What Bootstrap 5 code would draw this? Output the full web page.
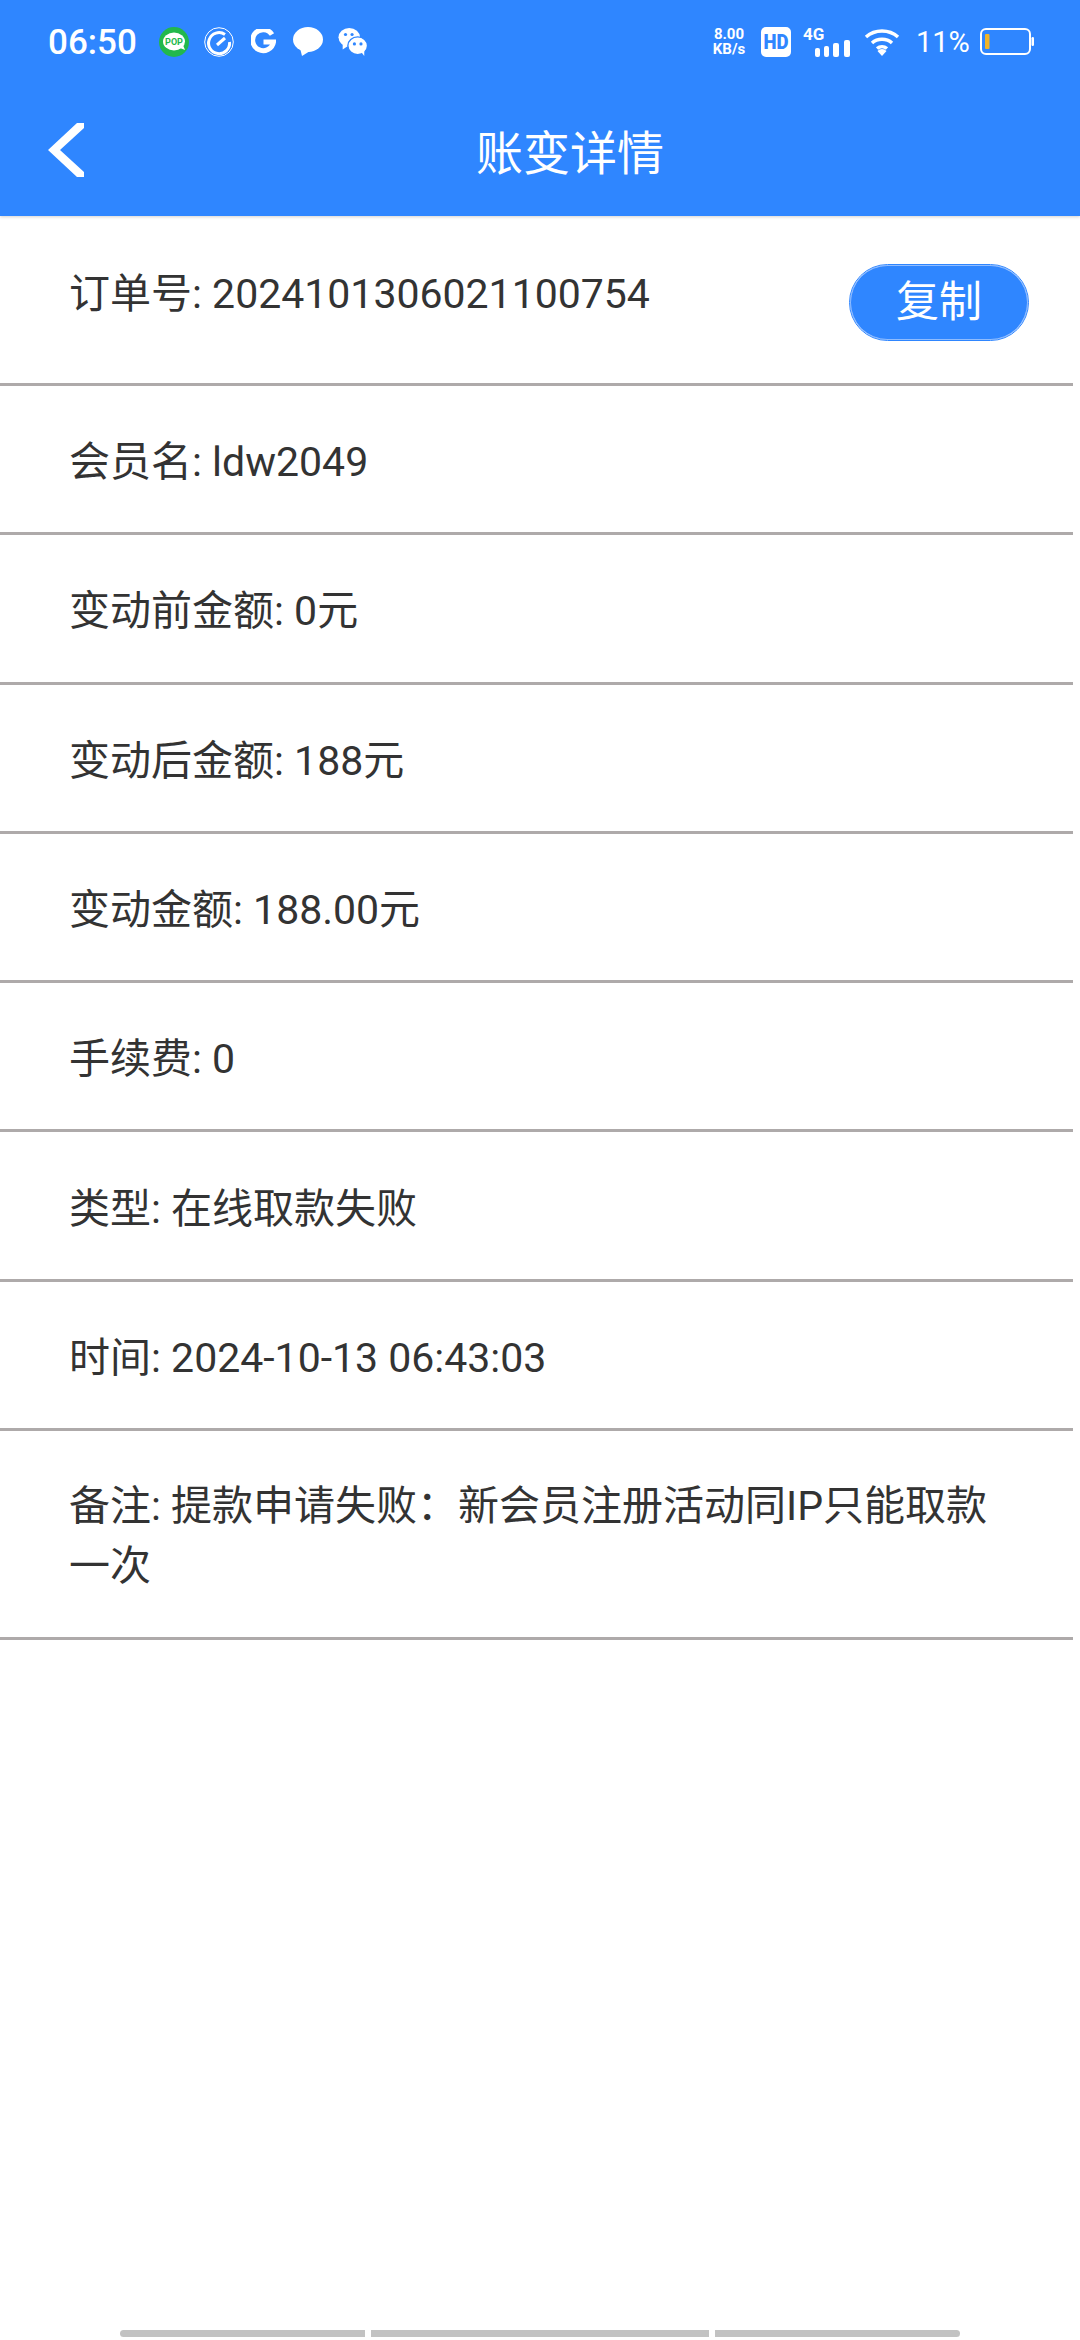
<!DOCTYPE html>
<html lang="zh-CN">
<head>
    <meta charset="UTF-8">
    <meta name="viewport" content="width=device-width, initial-scale=1.0">
    <title>账变详情</title>
    <link href="https://cdn.jsdelivr.net/npm/bootstrap@5.3.0/dist/css/bootstrap.min.css" rel="stylesheet">
    <style>
        body {
            background-color: #fff;
            font-family: Roboto, "Noto Sans CJK SC", sans-serif;
            color: #333;
        }
        .page-wrap {
            width: 1080px;
            height: 2340px;
        }
        .app-header {
            height: 216px;
            background-color: #2f86ff;
            color: #fff;
            box-shadow: 0 1px 3px rgba(0,0,0,.18);
        }
        .status-row {
            height: 84px;
            padding: 0 46px 0 48px;
        }
        .status-time {
            font-size: 35px;
            font-weight: 500;
            line-height: 1;
            width: 111px;
        }
        .app-gap { margin-left: 15px; }
        .app-gap-wide { margin-left: 17px; }
        .net-speed {
            width: 36px;
            font-size: 15px;
            font-weight: 700;
            line-height: 15px;
            text-align: center;
            white-space: nowrap;
        }
        .hd-icon { margin-left: 14px; }
        .signal-icon { margin-left: 12px; }
        .wifi-icon { margin-left: 13px; }
        .battery-text {
            margin-left: 16px;
            width: 54px;
            font-size: 29px;
            line-height: 1;
        }
        .battery-icon { margin-left: 10px; }
        .title-row {
            height: 132px;
        }
        .back-btn {
            left: 48px;
            top: 39px;
        }
        .page-title {
            font-size: 47px;
            line-height: 1;
            margin-top: 6px;
            margin-left: 60px;
        }
        .detail-row {
            width: 1073px;
            padding: 6px 46px 0 69px;
            font-size: 41px;
            line-height: 60px;
            border-bottom: 3px solid #aeaaaa;
            height: 149.3px;
        }
        .detail-order {
            height: 170px;
            padding-top: 48px;
            padding-right: 45px;
            align-items: flex-start !important;
        }
        .detail-note {
            height: 209px;
            padding-top: 45px;
            padding-right: 70px;
            align-items: flex-start !important;
        }
        .copy-btn {
            width: 178px;
            height: 75px;
            margin-top: 1px;
            padding: 0;
            border-radius: 38px;
            background-color: #2f86ff;
            border: 1px solid #8fbcff;
            outline: 1px solid #2f86ff;
            color: #fff;
            font-size: 43px;
            line-height: 1;
        }
        .scroll-wrap {
            gap: 6px;
            margin-bottom: 3px;
        }
        .scroll-bar {
            height: 7px;
            background-color: #c2c2c2;
        }
        .bar-left { width: 245px; border-radius: 4px 0 0 4px; }
        .bar-mid { width: 338px; }
        .bar-right { width: 245px; border-radius: 0 4px 4px 0; }
    </style>
</head>
<body class="m-0">
<div class="page-wrap d-flex flex-column">
    <header class="app-header flex-shrink-0">
        <div class="status-row d-flex align-items-center">
            <span class="status-time">06:50</span>
            <div class="d-flex align-items-center">
                <svg width="30" height="30" viewBox="0 0 30 30"><circle cx="15" cy="15" r="15" fill="#22b84c"/><ellipse cx="15" cy="14.500" rx="11" ry="9" fill="#fff"/><path d="M21 21l5 2-2-5z" fill="#fff"/><text x="15" y="18" font-size="9" font-weight="700" text-anchor="middle" fill="#22b84c" font-family="Roboto">POP</text></svg>
                <svg class="app-gap" width="30" height="30" viewBox="0 0 30 30" fill="none" stroke="#fff"><circle cx="15" cy="15" r="14.300" stroke-width="1"/><path d="M21 7.500A10.500 10.500 0 1 0 25.500 15" stroke-width="3"/><path d="M13 18l8-7" stroke-width="3"/></svg>
                <svg class="app-gap-wide" width="25" height="26" viewBox="0 0 25 26" fill="none" stroke="#fff" stroke-width="5"><path d="M21 5.500A10.500 10.500 0 1 0 22.500 13H12.500"/></svg>
                <svg class="app-gap-wide" width="30" height="30" viewBox="0 0 30 30" fill="#fff"><ellipse cx="15" cy="12.500" rx="15" ry="12.500"/><path d="M7 21l2 8 8-5z"/></svg>
                <svg class="app-gap" width="30" height="30" viewBox="0 0 32 32"><ellipse cx="12" cy="11" rx="11.500" ry="10" fill="#fff"/><path d="M5 17l0 7 6-4z" fill="#fff"/><ellipse cx="21" cy="20" rx="10.500" ry="9.500" fill="#fff" stroke="#2f86ff" stroke-width="1.500"/><path d="M25 27l3 4 0-7z" fill="#fff"/><circle cx="8" cy="8" r="1.700" fill="#2f86ff"/><circle cx="15" cy="8" r="1.700" fill="#2f86ff"/><circle cx="17.500" cy="18" r="1.700" fill="#2f86ff"/><circle cx="24.500" cy="18" r="1.700" fill="#2f86ff"/></svg>
            </div>
            <div class="d-flex align-items-center ms-auto">
                <div class="net-speed">8.00<br>KB/s</div>
                <svg class="hd-icon" width="30" height="30" viewBox="0 0 30 30"><rect width="30" height="30" rx="5" fill="#fff"/><text x="15" y="22" font-size="20" font-weight="900" text-anchor="middle" textLength="25" lengthAdjust="spacingAndGlyphs" fill="#2f86ff" font-family="Roboto">HD</text></svg>
                <svg class="signal-icon" width="48" height="30" viewBox="0 0 48 30" fill="#fff"><text x="0" y="13" font-size="17" font-weight="700" font-family="Roboto">4G</text><rect x="12" y="21" width="5" height="9" rx="2"/><rect x="21" y="19" width="5" height="11" rx="2"/><rect x="30" y="16" width="6" height="14" rx="2"/><rect x="41" y="13" width="6" height="17" rx="2"/></svg>
                <svg class="wifi-icon" width="36" height="28" viewBox="0 0 36 28" fill="none" stroke="#fff" stroke-width="3.500"><path d="M2 9C11 1 25 1 34 9"/><path d="M8 15C13.500 10 22.500 10 28 15"/><path d="M13 20.500C16 18 20 18 23 20.500"/><path d="M18 28l-4.500-5a6 6 0 0 1 9 0z" fill="#fff" stroke="none"/></svg>
                <span class="battery-text">11%</span>
                <svg class="battery-icon" width="54" height="28" viewBox="0 0 54 28"><rect x="1" y="1" width="49" height="25" rx="5" fill="none" stroke="#fff" stroke-width="2"/><rect x="5" y="6" width="4.500" height="15" rx="1" fill="#f0b429"/><rect x="51.500" y="9" width="2.500" height="9" rx="1.200" fill="#fff"/></svg>
            </div>
        </div>
        <div class="title-row position-relative d-flex align-items-center justify-content-center">
            <svg class="back-btn position-absolute" width="36" height="54" viewBox="0 0 36 54" fill="#fff"><path d="M29 0H36V5L12 27L36 49V54H29L0 27Z"/></svg>
            <span class="page-title">账变详情</span>
        </div>
    </header>

    <div class="detail-row detail-order d-flex justify-content-between">
        <span>订单号: 2024101306021100754</span>
        <button type="button" class="btn copy-btn">复制</button>
    </div>
    <div class="detail-row d-flex align-items-center">会员名: ldw2049</div>
    <div class="detail-row d-flex align-items-center">变动前金额: 0元</div>
    <div class="detail-row d-flex align-items-center">变动后金额: 188元</div>
    <div class="detail-row d-flex align-items-center">变动金额: 188.00元</div>
    <div class="detail-row d-flex align-items-center">手续费: 0</div>
    <div class="detail-row d-flex align-items-center">类型: 在线取款失败</div>
    <div class="detail-row d-flex align-items-center">时间: 2024-10-13 06:43:03</div>
    <div class="detail-row detail-note d-flex">备注: 提款申请失败：新会员注册活动同IP只能取款一次</div>

    <div class="scroll-wrap d-flex justify-content-center mt-auto">
        <div class="scroll-bar bar-left"></div>
        <div class="scroll-bar bar-mid"></div>
        <div class="scroll-bar bar-right"></div>
    </div>
</div>
<script src="https://cdn.jsdelivr.net/npm/bootstrap@5.3.0/dist/js/bootstrap.bundle.min.js"></script>
</body>
</html>
